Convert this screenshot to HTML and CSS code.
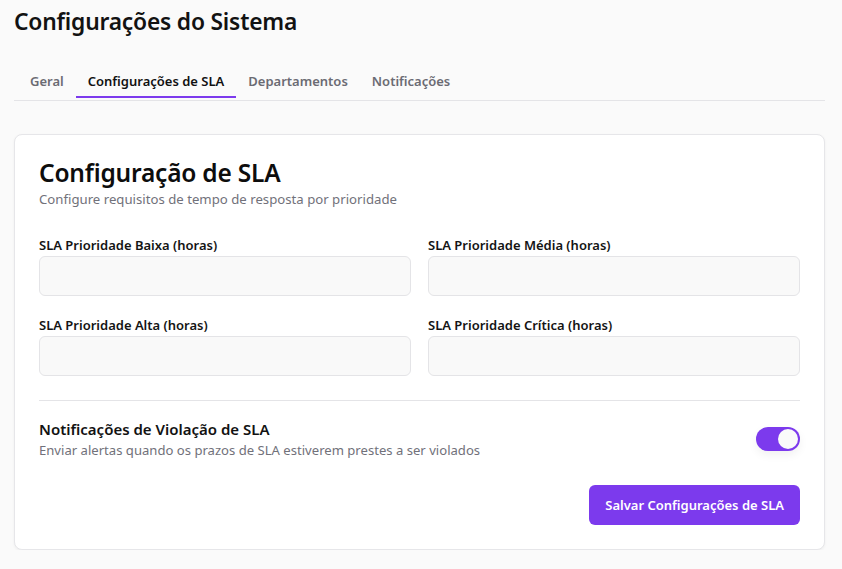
FILE: index.html
```html
<!DOCTYPE html>
<html lang="pt">
<head>
<meta charset="utf-8">
<link rel="stylesheet" href="styles.css">
</head>
<body>
<div class="page">
  <h1 class="page-title">Configurações do Sistema</h1>
  <div class="tabs-wrap">
    <nav class="tabs">
      <span class="tab">Geral</span>
      <span class="tab active">Configurações de SLA</span>
      <span class="tab">Departamentos</span>
      <span class="tab">Notificações</span>
    </nav>
  </div>
  <section class="card">
    <h2 class="card-title">Configuração de SLA</h2>
    <p class="card-sub">Configure requisitos de tempo de resposta por prioridade</p>
    <div class="grid">
      <div class="field">
        <label>SLA Prioridade Baixa (horas)</label>
        <input class="input" type="text">
      </div>
      <div class="field">
        <label>SLA Prioridade Média (horas)</label>
        <input class="input" type="text">
      </div>
      <div class="field">
        <label>SLA Prioridade Alta (horas)</label>
        <input class="input" type="text">
      </div>
      <div class="field">
        <label>SLA Prioridade Crítica (horas)</label>
        <input class="input" type="text">
      </div>
    </div>
    <hr class="divider">
    <div class="notify">
      <div>
        <div class="notify-title">Notificações de Violação de SLA</div>
        <div class="notify-desc">Enviar alertas quando os prazos de SLA estiverem prestes a ser violados</div>
      </div>
      <span class="toggle"><span class="knob"></span></span>
    </div>
    <div class="actions">
      <button class="btn">Salvar Configurações de SLA</button>
    </div>
  </section>
</div>
</body>
</html>
```
FILE: styles.css
```css
* { box-sizing: border-box; }
html, body { margin: 0; padding: 0; }
body {
  background: #fafafa;
  font-family: "Noto Sans", "Open Sans", sans-serif;
  color: #111111;
}
.page {
  padding: 6px 17px 0 14px;
}
.page-title {
  margin: 0;
  font-size: 22.8px;
  line-height: 32px;
  font-weight: 600;
  color: #121212;
  letter-spacing: -0.2px;
}
.tabs-wrap {
  margin-top: 27px;
  border-bottom: 1px solid #e4e4e7;
  padding: 0 4px 2px;
}
.tabs {
  display: flex;
}
.tab {
  padding: 6px 12px 5px;
  font-size: 13px;
  font-weight: 600;
  color: #6b6b73;
  line-height: 20px;
  border-bottom: 2px solid transparent;
}
.tab.active {
  color: #111111;
  border-bottom-color: #7c3aed;
}
.card {
  margin-top: 33px;
  background: #ffffff;
  border: 1px solid #e6e6e9;
  border-radius: 8px;
  box-shadow: 0 1px 3px rgba(0,0,0,0.05);
  padding: 22px 24px 24px 24px;
}
.card-title {
  margin: 0;
  font-size: 24.5px;
  line-height: 32px;
  font-weight: 600;
  color: #0d0d0d;
  letter-spacing: -0.2px;
}
.card-sub {
  margin: 0;
  font-size: 13.2px;
  line-height: 20px;
  color: #71717a;
}
.grid {
  margin-top: 26px;
  display: grid;
  grid-template-columns: 1fr 1fr;
  column-gap: 17px;
  row-gap: 19px;
}
.field label {
  display: block;
  font-size: 13px;
  font-weight: 600;
  line-height: 20px;
  color: #141414;
  margin-bottom: 1px;
}
.input {
  display: block;
  width: 100%;
  height: 40px;
  border: 1px solid #e4e4e7;
  border-radius: 6px;
  background: #f9f9f9;
  font: inherit;
}
.divider {
  margin: 24px 0 0;
  border: 0;
  border-top: 1px solid #e4e4e7;
}
.notify {
  margin-top: 17px;
  display: flex;
  justify-content: space-between;
  align-items: center;
}
.notify-title {
  font-size: 15px;
  font-weight: 600;
  line-height: 22px;
  color: #121212;
}
.notify-desc {
  font-size: 13.1px;
  line-height: 20px;
  color: #71717a;
}
.toggle {
  width: 44px;
  height: 24px;
  border-radius: 12px;
  background: #7c3aed;
  display: flex;
  align-items: center;
  justify-content: flex-end;
  padding: 2px;
  margin-top: -1px;
  box-shadow: 0 4px 10px rgba(0,0,0,0.06);
}
.knob {
  width: 20px;
  height: 20px;
  border-radius: 50%;
  background: #fafafa;
}
.actions {
  margin-top: 25px;
  display: flex;
  justify-content: flex-end;
}
.btn {
  height: 40px;
  padding: 0 16px;
  border: 0;
  border-radius: 6px;
  background: #7c3aed;
  color: #ffffff;
  font: inherit;
  font-size: 13px;
  font-weight: 600;
}
```
